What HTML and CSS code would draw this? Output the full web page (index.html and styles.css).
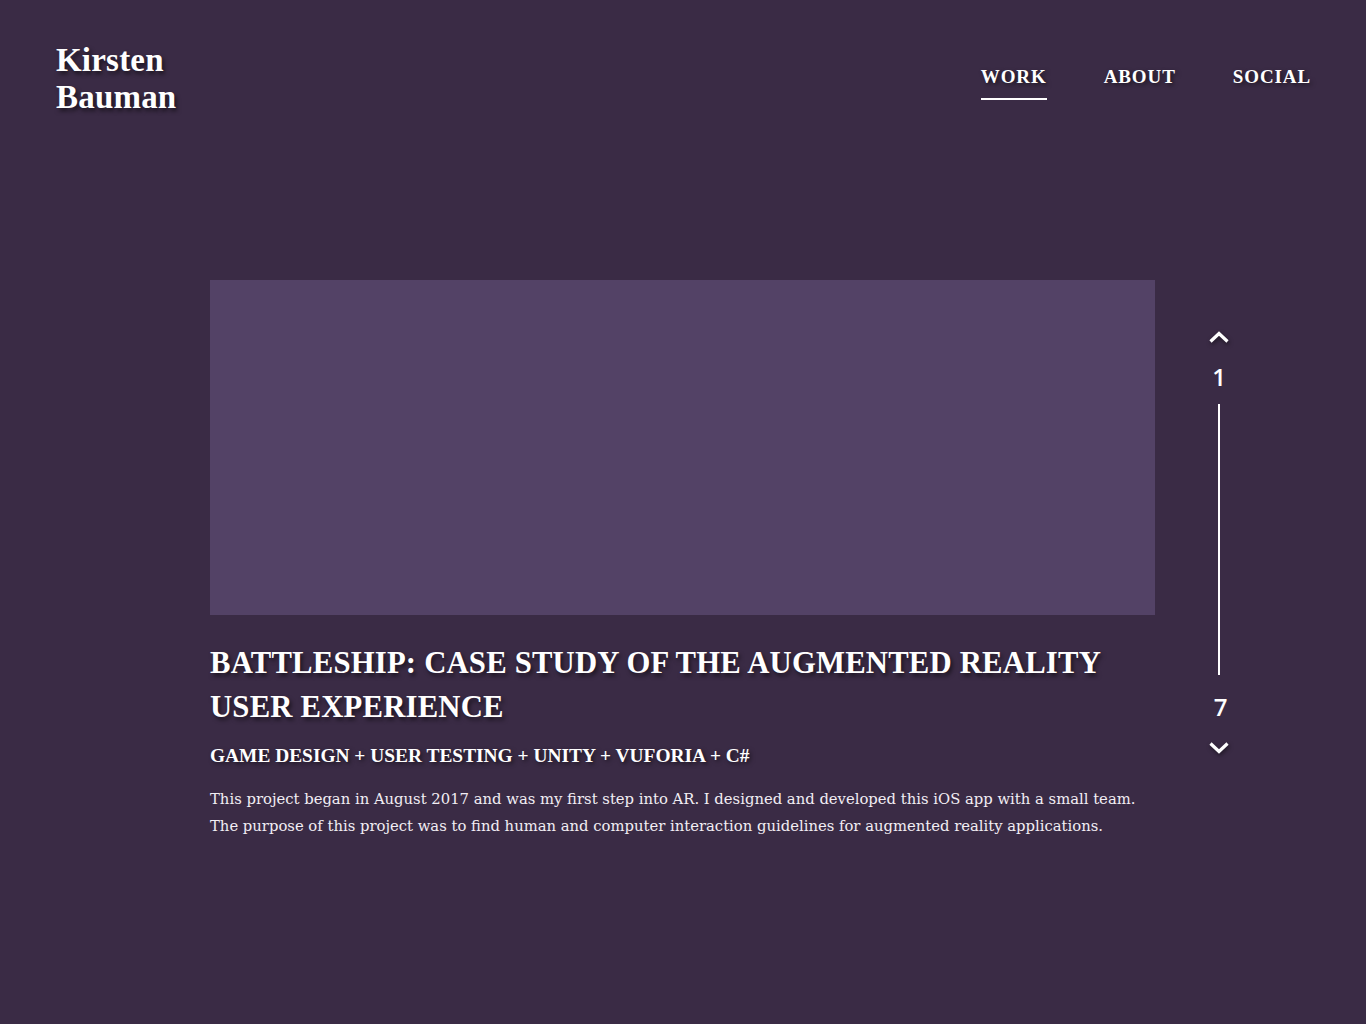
FILE: index.html
```html
<!DOCTYPE html>
<html lang="en">
<head>
<meta charset="utf-8">
<title>Kirsten Bauman</title>
<link rel="stylesheet" href="styles.css">
</head>
<body>
<header class="top">
  <a class="logo" href="#">Kirsten<br>Bauman</a>
  <nav class="nav">
    <a class="nav-link active" href="#">WORK</a>
    <a class="nav-link" href="#">ABOUT</a>
    <a class="nav-link" href="#">SOCIAL</a>
  </nav>
</header>
<main class="main">
  <article class="project">
    <div class="thumb"></div>
    <h1 class="title">BATTLESHIP: CASE STUDY OF THE AUGMENTED REALITY USER EXPERIENCE</h1>
    <h2 class="tags">GAME DESIGN + USER TESTING + UNITY + VUFORIA + C#</h2>
    <p class="desc">This project began in August 2017 and was my first step into AR. I designed and developed this iOS app with a small team. The purpose of this project was to find human and computer interaction guidelines for augmented reality applications.</p>
  </article>
  <aside class="pager">
    <svg class="chev" width="22" height="14" viewBox="0 0 22 14"><path d="M2.5 11.5 L11 3.5 L19.5 11.5" fill="none" stroke="#fff" stroke-width="3.2"/></svg>
    <span class="num num-first">1</span>
    <span class="track"></span>
    <span class="num num-last">7</span>
    <svg class="chev" width="22" height="14" viewBox="0 0 22 14"><path d="M2.5 2.5 L11 10.5 L19.5 2.5" fill="none" stroke="#fff" stroke-width="3.2"/></svg>
  </aside>
</main>
</body>
</html>
```
FILE: styles.css
```css
html, body {
  margin: 0;
  padding: 0;
}
body {
  background: #3a2b45;
  color: #fff;
  font-family: "Liberation Serif", serif;
  min-height: 1024px;
}
.top {
  display: flex;
  justify-content: space-between;
  align-items: flex-start;
  padding: 42px 55px 0 56px;
}
.logo {
  color: #fff;
  text-decoration: none;
  font-weight: bold;
  font-size: 33px;
  line-height: 37px;
  letter-spacing: 0.2px;
  text-shadow: 2px 3px 4px rgba(0,0,0,0.55);
}
.nav {
  display: flex;
  gap: 57px;
  padding-top: 23px;
}
.nav-link {
  color: #fff;
  text-decoration: none;
  font-weight: bold;
  font-size: 19px;
  letter-spacing: 0.9px;
  line-height: 24px;
  padding-bottom: 9px;
  border-bottom: 2px solid transparent;
  text-shadow: 2px 2px 4px rgba(0,0,0,0.55);
}
.nav-link.active {
  border-bottom-color: #fff;
}
.main {
  display: flex;
  padding: 164px 0 0 210px;
  gap: 46px;
}
.project {
  width: 945px;
}
.thumb {
  height: 335px;
  background: #534266;
}
.title {
  margin: 26px 0 0;
  font-size: 30.7px;
  line-height: 44px;
  font-weight: bold;
  letter-spacing: 0.2px;
  text-shadow: 2px 3px 4px rgba(0,0,0,0.55);
}
.tags {
  margin: 14px 0 0;
  font-size: 19.4px;
  line-height: 26px;
  font-weight: bold;
  letter-spacing: 0;
  text-shadow: 2px 2px 4px rgba(0,0,0,0.55);
}
.desc {
  margin: 16px 0 0;
  font-family: "DejaVu Serif", serif;
  font-size: 14.8px;
  line-height: 27px;
  color: #f2eef4;
}
.pager {
  display: flex;
  flex-direction: column;
  align-items: center;
  width: 36px;
  padding-top: 50px;
}
.chev {
  filter: drop-shadow(1px 2px 2px rgba(0,0,0,0.5));
}
.num {
  font-family: "Open Sans", sans-serif;
  font-weight: 600;
  font-size: 24px;
  line-height: 30px;
}
.num-first {
  margin: 18px 0 12px;
}
.num-last {
  margin: 17px 0 19px 3px;
}
.track {
  width: 2px;
  height: 271px;
  background: #fff;
}
```
